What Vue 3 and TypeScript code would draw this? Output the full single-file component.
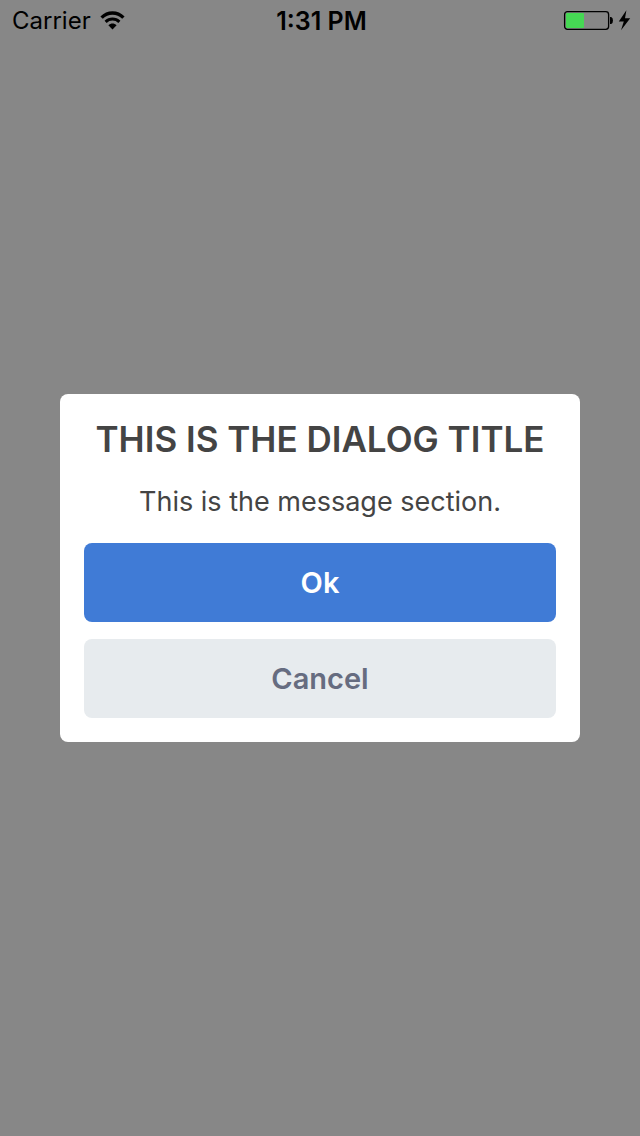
<script setup lang="ts">
import { ref } from 'vue'

interface Action {
  label: string
  kind: 'primary' | 'secondary'
}

const time = ref('1:31 PM')
const carrier = ref('Carrier')
const actions: Action[] = [
  { label: 'Ok', kind: 'primary' },
  { label: 'Cancel', kind: 'secondary' },
]
</script>

<template>
  <div class="screen">
    <header class="status">
      <div class="carrier">
        <span>{{ carrier }}</span>
        <svg class="wifi" viewBox="0 0 26 20" width="26" height="20" aria-hidden="true">
          <path d="M1.6 6.6C7.8.4 17.2.4 23.4 6.6" fill="none" stroke="#000" stroke-width="3.4" />
          <path d="M5.6 10.9C9.6 7.1 15.4 7.1 19.4 10.9" fill="none" stroke="#000" stroke-width="3" />
          <path d="M8.4 14.2C10.8 12 14.2 12 16.6 14.2L12.5 18.6Z" fill="#000" />
        </svg>
      </div>
      <div class="time">{{ time }}</div>
      <div class="power">
        <svg viewBox="0 0 68 22" width="68" height="22" aria-hidden="true">
          <rect x="1.6" y="1.6" width="44" height="17.8" rx="2.8" fill="none" stroke="#000" stroke-width="1.3" />
          <rect x="3" y="3" width="18" height="15" rx="1" fill="#46d854" />
          <path d="M47 7h1.2q1.8.8 1.8 3.5t-1.8 3.5H47z" fill="#000" />
          <path d="M63.4.2 55.8 11.6h5L58 20.2 67.2 8.2h-5.2z" fill="#000" />
        </svg>
      </div>
    </header>

    <main class="overlay">
      <section class="dialog" role="dialog" aria-modal="true" aria-labelledby="title" aria-describedby="message">
        <h1 id="title">THIS IS THE DIALOG TITLE</h1>
        <p id="message">This is the message section.</p>
        <div class="actions">
          <button v-for="a in actions" :key="a.label" type="button" :class="a.kind">{{ a.label }}</button>
        </div>
      </section>
    </main>
  </div>
</template>

<style>
body {
  margin: 0;
  background: #878787;
}
</style>

<style scoped>
.screen {
  display: grid;
  grid-template-rows: 42px 1fr 42px;
  min-height: 100vh;
  background: #878787;
  font-family: Inter, "Liberation Sans", sans-serif;
}
.status {
  display: grid;
  grid-template-columns: 1fr auto 1fr;
  align-items: center;
  padding: 0 9px 0 12px;
  font-size: 24px;
  line-height: 42px;
  color: #000;
}
.carrier {
  display: flex;
  align-items: center;
  gap: 9px;
}
.time {
  font-size: 25px;
  font-weight: 600;
}
.power {
  display: flex;
  justify-content: flex-end;
}
.overlay {
  display: grid;
  align-items: center;
  padding: 0 60px;
}
.dialog {
  padding: 24px;
  border-radius: 8px;
  background: #fff;
  color: #444;
  text-align: center;
}
h1 {
  margin: 0 0 24px;
  font-size: 35px;
  font-weight: 600;
  line-height: 42px;
}
p {
  margin: 0 0 23px;
  font-size: 27px;
  line-height: 36px;
}
.actions {
  display: grid;
  gap: 17px;
}
button {
  height: 79px;
  padding: 0;
  border: 0;
  border-radius: 8px;
  font: inherit;
  font-size: 29px;
  font-weight: 600;
}
.primary {
  background: #407bd6;
  color: #fff;
}
.secondary {
  background: #e7ebee;
  color: #666c80;
}
</style>
